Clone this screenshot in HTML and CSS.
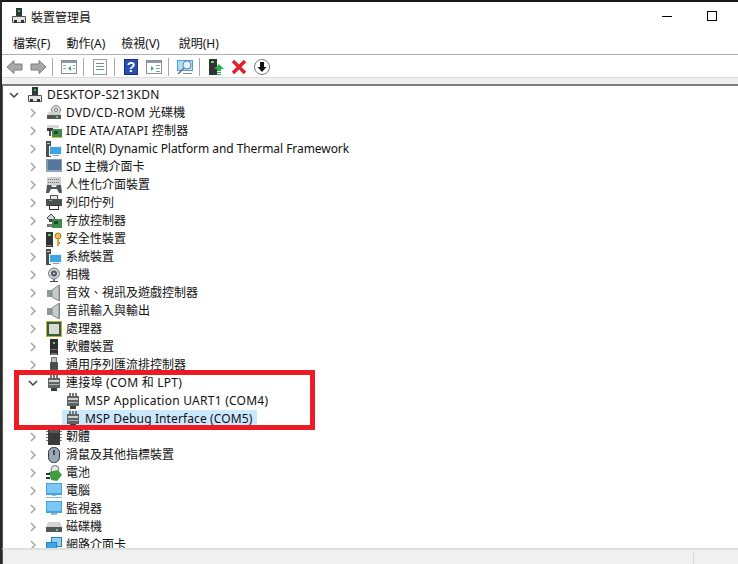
FILE: index.html
```html
<!DOCTYPE html>
<html lang="zh-Hant">
<head>
<meta charset="utf-8">
<title>裝置管理員</title>
<link rel="stylesheet" href="styles.css">
</head>
<body>
<svg class="defs" width="0" height="0" aria-hidden="true">
  <defs>
    <symbol id="pc" viewBox="0 0 16 16">
      <rect x="5" y="0" width="6" height="8" fill="#2c3a35"/><rect x="7" y="2" width="2" height="2" fill="#3fbf5a"/>
      <path d="M1.500 8.500h13v6h-13z" fill="#e4e4e4" stroke="#555"/><rect x="3" y="12" width="3" height="3" fill="#333"/><rect x="10" y="12" width="3" height="3" fill="#333"/>
    </symbol>
    <symbol id="dvd" viewBox="0 0 16 16">
      <circle cx="10" cy="5" r="4.500" fill="#d5d5d5" stroke="#8d8d8d"/><circle cx="10" cy="5" r="1.500" fill="#fff" stroke="#777"/>
      <path d="M1 10l2-3h10l2 3z" fill="#cfcfcf"/><rect x="1" y="10" width="14" height="4" fill="#555"/><rect x="10" y="11" width="2" height="2" fill="#5fd06c"/>
    </symbol>
    <symbol id="ide" viewBox="0 0 16 16">
      <path d="M1 2h12v3H1z" fill="#d8d8d8"/><rect x="1" y="5" width="6" height="3" fill="#3d3d3d"/><rect x="3" y="8" width="2" height="5" fill="#555"/>
      <rect x="6" y="6" width="10" height="9" fill="#3f8a4d"/><rect x="8" y="8" width="4" height="3" fill="#1e4f2a"/><rect x="6" y="14" width="10" height="1" fill="#d6b34a"/>
    </symbol>
    <symbol id="sys" viewBox="0 0 16 16">
      <rect x="0" y="0" width="5" height="16" fill="#4a4f4f"/><rect x="1" y="2" width="3" height="1" fill="#bbb"/><rect x="3" y="5" width="13" height="10" fill="#e8f2f8"/><rect x="4" y="6" width="11" height="7" fill="#3fa4e6"/>
      <rect x="7" y="14" width="6" height="1" fill="#9a9a9a"/>
    </symbol>
    <symbol id="sd" viewBox="0 0 16 16">
      <rect x="0" y="0" width="16" height="13" fill="#7f9bb8"/><rect x="2" y="1" width="13" height="10" fill="#55779b"/><rect x="0" y="11" width="16" height="2" fill="#92a8bf"/>
    </symbol>
    <symbol id="hid" viewBox="0 0 16 16">
      <rect x="1" y="0" width="14" height="9" fill="#cfd2d3"/>
      <path d="M2 2h1v1H2zM4 2h1v1H4zM6 2h1v1H6zM8 2h1v1H8zM10 2h1v1h-1zM12 2h1v1h-1zM2 5h1v1H2zM4 5h1v1H4zM6 5h1v1H6zM8 5h1v1H8zM10 5h1v1h-1zM12 5h1v1h-1z" fill="#6d7275"/>
      <path d="M0 16l1-8h4l1 2h4l1-2h4l1 8h-3l-2-4H5l-2 4z" fill="#4f5659"/>
    </symbol>
    <symbol id="printer" viewBox="0 0 16 16">
      <rect x="4.500" y="0.500" width="7" height="5" fill="#e6e6e6" stroke="#555"/><rect x="0" y="4" width="16" height="7" fill="#4b5052"/><rect x="3" y="5" width="3" height="1" fill="#4fc85f"/><rect x="3.500" y="10.500" width="9" height="4" fill="#fff" stroke="#333"/>
    </symbol>
    <symbol id="storage" viewBox="0 0 16 16">
      <path d="M1 5l4-4 4 4-4 3z" fill="#d8d8d8" stroke="#444"/><rect x="3" y="6" width="3" height="3" fill="#444"/>
      <rect x="6" y="6" width="10" height="9" fill="#3f8a4d"/><rect x="8" y="8" width="4" height="3" fill="#1e4f2a"/><rect x="1" y="11" width="5" height="3" fill="#777"/>
    </symbol>
    <symbol id="key" viewBox="0 0 16 16">
      <rect x="0" y="1" width="7" height="15" fill="#333"/><rect x="2" y="3" width="3" height="2" fill="#4fd060"/><rect x="1" y="14" width="5" height="1" fill="#888"/>
      <circle cx="12" cy="5" r="3" fill="#eebc52" stroke="#a57a22"/><rect x="11" y="8" width="2" height="7" fill="#d8a53e"/><rect x="13" y="11" width="1" height="2" fill="#a57a22"/>
    </symbol>
    <symbol id="cam" viewBox="0 0 16 16">
      <circle cx="8" cy="6.500" r="5.500" fill="#d2d2d2" stroke="#777"/><circle cx="8" cy="6.500" r="3" fill="#4b5c68"/><circle cx="8" cy="6.500" r="1" fill="#cfe4f0"/><rect x="7" y="12" width="2" height="2" fill="#777"/><rect x="4" y="14" width="8" height="1" fill="#444"/>
    </symbol>
    <symbol id="sound" viewBox="0 0 16 16">
      <rect x="1" y="5" width="5" height="7" fill="#8f9899"/><path d="M6 5l7-5v16l-7-4z" fill="#c5cbcb" stroke="#848c8c"/><rect x="13" y="0" width="1" height="16" fill="#7d8686"/>
    </symbol>
    <symbol id="cpu" viewBox="0 0 16 16">
      <rect x="0" y="0" width="16" height="16" fill="#c8a93a"/><rect x="1" y="1" width="14" height="14" fill="#33603c"/><rect x="3" y="3" width="10" height="10" fill="#d9d9d3"/>
    </symbol>
    <symbol id="soft" viewBox="0 0 16 16">
      <rect x="4" y="0" width="8" height="16" fill="#2f2f2f"/><rect x="7" y="3" width="2" height="2" fill="#3fe060"/><rect x="5" y="10" width="6" height="1" fill="#777"/><rect x="5" y="14" width="6" height="2" fill="#777"/>
    </symbol>
    <symbol id="usb" viewBox="0 0 16 16">
      <rect x="5.500" y="0.500" width="5" height="5" fill="#c4c4c4" stroke="#777"/><rect x="4" y="5" width="8" height="8" rx="1" fill="#4a4f50"/><rect x="7" y="13" width="2" height="3" fill="#555"/>
    </symbol>
    <symbol id="port" viewBox="0 0 16 16">
      <path d="M4 0h2v3H4zM7 0h2v3H7zM10 0h2v3h-2z" fill="#777"/><rect x="2" y="3" width="12" height="10" fill="#5f6364"/><rect x="3" y="5" width="10" height="2" fill="#cfcfcf"/><rect x="3" y="9" width="10" height="1" fill="#b0b0b0"/><rect x="5" y="13" width="6" height="3" fill="#3a3d3e"/>
    </symbol>
    <symbol id="firmware" viewBox="0 0 16 16">
      <path d="M0 2h2v1H0zM0 5h2v1H0zM0 8h2v1H0zM0 11h2v1H0zM14 2h2v1h-2zM14 5h2v1h-2zM14 8h2v1h-2zM14 11h2v1h-2z" fill="#777"/><rect x="2" y="0" width="12" height="16" fill="#3a3a3a"/><rect x="3" y="1" width="10" height="3" fill="#595959"/>
    </symbol>
    <symbol id="mouse" viewBox="0 0 16 16">
      <rect x="2.500" y="0.500" width="11" height="15" rx="5" fill="#9aa8b5" stroke="#333"/><rect x="7" y="3" width="2" height="5" fill="#3f4a55"/>
    </symbol>
    <symbol id="battery" viewBox="0 0 16 16">
      <circle cx="9" cy="4.500" r="4" fill="#e8e8e8" stroke="#777"/><path d="M3 7l9-2 4 5-5 6-6-1z" fill="#3f9c3f"/><path d="M0 8h4v2H0zM0 12h4v2H0z" fill="#333"/>
    </symbol>
    <symbol id="monitor" viewBox="0 0 16 16">
      <rect x="0" y="0" width="16" height="12" fill="#3fa4e6"/><rect x="1" y="1" width="14" height="9" fill="#7cc8f2"/><rect x="6" y="12" width="4" height="1" fill="#9fb6c4"/><rect x="0" y="14" width="16" height="1" fill="#a8b4bb"/>
    </symbol>
    <symbol id="monitor2" viewBox="0 0 16 16">
      <rect x="0" y="0" width="16" height="12" fill="#3fa4e6"/><rect x="1" y="1" width="14" height="9" fill="#7cc8f2"/><rect x="5" y="12" width="6" height="2" fill="#9fb6c4"/>
    </symbol>
    <symbol id="disk" viewBox="0 0 16 16">
      <path d="M2 3h12l2 5H0z" fill="#d3d3d3"/><rect x="0" y="8" width="16" height="5" fill="#555"/><rect x="10" y="10" width="2" height="2" fill="#5fd06c"/>
    </symbol>
    <symbol id="net" viewBox="0 0 16 16">
      <rect x="5.500" y="0.500" width="10" height="9" fill="#8ecdf2" stroke="#2f7fb8"/><rect x="0.500" y="5.500" width="10" height="9" fill="#3fa4e6" stroke="#2f7fb8"/>
    </symbol>
    <symbol id="closed" viewBox="0 0 10 10">
      <path d="M3 1l4 4-4 4" fill="none" stroke="#a6a6a6" stroke-width="1.500"/>
    </symbol>
    <symbol id="open" viewBox="0 0 10 10">
      <path d="M1 3l4 4 4-4" fill="none" stroke="#404040" stroke-width="1.500"/>
    </symbol>
  </defs>
</svg>

<div class="window">
  <header class="titlebar">
    <svg class="title-icon"><use href="#pc"/></svg>
    <span class="title">裝置管理員</span>
    <div class="controls">
      <span class="minimize"></span>
      <span class="maximize"></span>
    </div>
  </header>

  <nav class="menubar">
    <span>檔案(F)</span>
    <span>動作(A)</span>
    <span class="menu-view">檢視(V)</span>
    <span>說明(H)</span>
  </nav>

  <div class="toolbar">
    <svg class="tool" viewBox="0 0 18 18"><path d="M1 9l7-6.500V6h8v6H8v3.500z" fill="#a9a9a9" stroke="#7d7d7d"/></svg>
    <svg class="tool" viewBox="0 0 18 18"><path d="M17 9l-7-6.500V6H2v6h8v3.500z" fill="#a9a9a9" stroke="#7d7d7d"/></svg>
    <i class="sep"></i>
    <svg class="tool" viewBox="0 0 18 18"><rect x="1.500" y="2.500" width="15" height="13" fill="#fff" stroke="#8a8f93"/><rect x="2" y="3" width="14" height="2" fill="#8d9aa5"/><path d="M11 8v5l-3-2.500z" fill="#3dae5a"/><path d="M3 7h3v1H3zM3 10h3v1H3zM13 7h2v1h-2zM13 10h2v1h-2z" fill="#7aa"/></svg>
    <i class="sep"></i>
    <svg class="tool" viewBox="0 0 18 18"><rect x="2.500" y="1.500" width="13" height="15" fill="#fdfdfd" stroke="#9a9a9a"/><path d="M5 5h8v1H5zM5 8h8v1H5zM5 11h8v1H5z" fill="#7b8b98"/><rect x="7" y="16" width="4" height="1" fill="#3dbdd8"/></svg>
    <i class="sep"></i>
    <svg class="tool" viewBox="0 0 18 18"><rect x="2.500" y="1.500" width="13" height="15" fill="#2b4fb0" stroke="#1a2f80"/><text x="9" y="14" class="help-mark">?</text></svg>
    <svg class="tool" viewBox="0 0 18 18"><rect x="1.500" y="2.500" width="15" height="13" fill="#fff" stroke="#8a8f93"/><rect x="2" y="3" width="14" height="2" fill="#8d9aa5"/><path d="M6 8v5l3-2.500z" fill="#3dae5a"/><path d="M11 7h4v1h-4zM11 10h4v1h-4zM11 13h4v1h-4z" fill="#7aa"/></svg>
    <i class="sep"></i>
    <svg class="tool" viewBox="0 0 18 18"><rect x="1.500" y="2.500" width="15" height="10" fill="#a9dcf6" stroke="#4ea1d6"/><circle cx="11" cy="7" r="4" fill="#e4f4fc" stroke="#6e8796"/><path d="M8 10l-6 6" stroke="#6e6e6e" stroke-width="1.500"/><rect x="7" y="15" width="9" height="1" fill="#8a8a8a"/></svg>
    <i class="sep"></i>
    <svg class="tool" viewBox="0 0 18 18"><rect x="2" y="1" width="8" height="16" fill="#333"/><rect x="4" y="3" width="3" height="2" fill="#4ee06a"/><path d="M12 6l5 5h-3v2h-4v-2H7z" fill="#28b24b"/><path d="M10 14h4v1h-4zM10 16h4v1h-4z" fill="#28b24b"/></svg>
    <svg class="tool" viewBox="0 0 18 18"><path d="M3 3l12 12M15 3L3 15" stroke="#e0202a" stroke-width="3.500"/></svg>
    <svg class="tool" viewBox="0 0 18 18"><circle cx="9" cy="9" r="7.500" fill="#fff" stroke="#777"/><path d="M7 4h4v5h2.500L9 14 4.500 9H7z" fill="#111"/></svg>
  </div>
  <div class="strip"></div>

  <main class="tree">
    <div class="row root"><svg class="arrow"><use href="#open"/></svg><svg class="icon"><use href="#pc"/></svg><span class="label caps">DESKTOP-S213KDN</span></div>
    <div class="row"><svg class="arrow"><use href="#closed"/></svg><svg class="icon"><use href="#dvd"/></svg><span class="label caps">DVD/CD-ROM 光碟機</span></div>
    <div class="row"><svg class="arrow"><use href="#closed"/></svg><svg class="icon"><use href="#ide"/></svg><span class="label caps">IDE ATA/ATAPI 控制器</span></div>
    <div class="row"><svg class="arrow"><use href="#closed"/></svg><svg class="icon"><use href="#sys"/></svg><span class="label long">Intel(R) Dynamic Platform and Thermal Framework</span></div>
    <div class="row"><svg class="arrow"><use href="#closed"/></svg><svg class="icon"><use href="#sd"/></svg><span class="label">SD 主機介面卡</span></div>
    <div class="row"><svg class="arrow"><use href="#closed"/></svg><svg class="icon"><use href="#hid"/></svg><span class="label">人性化介面裝置</span></div>
    <div class="row"><svg class="arrow"><use href="#closed"/></svg><svg class="icon"><use href="#printer"/></svg><span class="label">列印佇列</span></div>
    <div class="row"><svg class="arrow"><use href="#closed"/></svg><svg class="icon"><use href="#storage"/></svg><span class="label">存放控制器</span></div>
    <div class="row"><svg class="arrow"><use href="#closed"/></svg><svg class="icon"><use href="#key"/></svg><span class="label">安全性裝置</span></div>
    <div class="row"><svg class="arrow"><use href="#closed"/></svg><svg class="icon"><use href="#sys"/></svg><span class="label">系統裝置</span></div>
    <div class="row"><svg class="arrow"><use href="#closed"/></svg><svg class="icon"><use href="#cam"/></svg><span class="label">相機</span></div>
    <div class="row"><svg class="arrow"><use href="#closed"/></svg><svg class="icon"><use href="#sound"/></svg><span class="label">音效、視訊及遊戲控制器</span></div>
    <div class="row"><svg class="arrow"><use href="#closed"/></svg><svg class="icon"><use href="#sound"/></svg><span class="label">音訊輸入與輸出</span></div>
    <div class="row"><svg class="arrow"><use href="#closed"/></svg><svg class="icon"><use href="#cpu"/></svg><span class="label">處理器</span></div>
    <div class="row"><svg class="arrow"><use href="#closed"/></svg><svg class="icon"><use href="#soft"/></svg><span class="label">軟體裝置</span></div>
    <div class="row"><svg class="arrow"><use href="#closed"/></svg><svg class="icon"><use href="#usb"/></svg><span class="label">通用序列匯流排控制器</span></div>
    <div class="row"><svg class="arrow"><use href="#open"/></svg><svg class="icon"><use href="#port"/></svg><span class="label caps">連接埠 (COM 和 LPT)</span></div>
    <div class="row child"><svg class="icon"><use href="#port"/></svg><span class="label caps">MSP Application UART1 (COM4)</span></div>
    <div class="row child"><div class="selected"><svg class="icon"><use href="#port"/></svg><span class="label mixed">MSP Debug Interface (COM5)</span></div></div>
    <div class="row"><svg class="arrow"><use href="#closed"/></svg><svg class="icon"><use href="#firmware"/></svg><span class="label">韌體</span></div>
    <div class="row"><svg class="arrow"><use href="#closed"/></svg><svg class="icon"><use href="#mouse"/></svg><span class="label">滑鼠及其他指標裝置</span></div>
    <div class="row"><svg class="arrow"><use href="#closed"/></svg><svg class="icon"><use href="#battery"/></svg><span class="label">電池</span></div>
    <div class="row"><svg class="arrow"><use href="#closed"/></svg><svg class="icon"><use href="#monitor"/></svg><span class="label">電腦</span></div>
    <div class="row"><svg class="arrow"><use href="#closed"/></svg><svg class="icon"><use href="#monitor2"/></svg><span class="label">監視器</span></div>
    <div class="row"><svg class="arrow"><use href="#closed"/></svg><svg class="icon"><use href="#disk"/></svg><span class="label">磁碟機</span></div>
    <div class="row"><svg class="arrow"><use href="#closed"/></svg><svg class="icon"><use href="#net"/></svg><span class="label">網路介面卡</span></div>
  </main>

  <footer class="statusbar">
    <div class="status-main"></div>
    <div class="status-side"></div>
  </footer>

  <div class="highlight"></div>
</div>
</body>
</html>
```

FILE: styles.css
```css
* {
  box-sizing: border-box;
}

html,
body {
  margin: 0;
  height: 100%;
  overflow: hidden;
  background: #fff;
}

.defs {
  position: absolute;
}

.window {
  position: relative;
  display: flex;
  flex-direction: column;
  width: 738px;
  height: 564px;
  border-top: 2px solid #1a1a1a;
  border-left: 2px solid #2a2a2a;
  font-family: "Noto Sans", "Noto Sans CJK TC", sans-serif;
  font-size: 12px;
  color: #111;
}

.titlebar {
  display: flex;
  align-items: center;
  height: 28px;
  flex: none;
  padding-left: 9px;
}

.title-icon {
  width: 16px;
  height: 16px;
  flex: none;
}

.title {
  margin-left: 4px;
  padding-top: 2px;
  font-size: 12px;
}

.controls {
  display: flex;
  align-items: center;
  margin-left: auto;
  padding-right: 21px;
  gap: 35px;
}

.minimize {
  width: 10px;
  height: 1px;
  background: #000;
}

.maximize {
  width: 10px;
  height: 10px;
  border: 1px solid #000;
}

.menubar {
  display: flex;
  align-items: center;
  flex: none;
  height: 25px;
  padding: 2px 0 0 11px;
  gap: 16px;
  border-bottom: 1px solid #b0b0b0;
}

.menu-view {
  margin-right: 3px;
}

.toolbar {
  display: flex;
  align-items: center;
  flex: none;
  height: 22px;
  padding: 2px 0 0 4px;
}

.tool {
  width: 18px;
  height: 18px;
  margin-right: 5px;
  flex: none;
}

.sep {
  width: 1px;
  height: 18px;
  margin-right: 7px;
  background: #a8a8a8;
}

.help-mark {
  font-family: "Liberation Sans", sans-serif;
  font-size: 14px;
  font-weight: 700;
  fill: #fff;
  text-anchor: middle;
}

.strip {
  flex: none;
  height: 9px;
  background: #f0f0f0;
  border-top: 1px solid #dcdcdc;
  border-bottom: 2px solid #7c7c7c;
}

.tree {
  flex: 1;
  min-height: 0;
  overflow: hidden;
  border-left: 1px solid #555;
}

.row {
  display: flex;
  align-items: center;
  height: 18px;
  padding-left: 25px;
  white-space: nowrap;
}

.root {
  padding-left: 6px;
}

.child {
  padding-left: 59px;
}

.child .icon {
  margin-left: 3px;
}

.arrow {
  width: 10px;
  height: 10px;
  margin-right: 8px;
  flex: none;
}

.icon {
  width: 16px;
  height: 16px;
  flex: none;
}

.label {
  margin-left: 4px;
  line-height: 18px;
}

.caps {
  letter-spacing: 0.25px;
}

.mixed {
  letter-spacing: 0.12px;
}

.long {
  letter-spacing: -0.06px;
}

.selected {
  display: flex;
  align-items: center;
  height: 18px;
  padding-right: 4px;
  background: #cce8ff;
}

.statusbar {
  display: flex;
  flex: none;
  height: 16px;
  background: #f0f0f0;
  border-top: 2px solid #e0e0e0;
  border-left: 1px solid #555;
}

.status-main {
  width: 691px;
  margin-top: 2px;
  border-right: 1px solid #d8d8d8;
}

.status-side {
  flex: 1;
}

.highlight {
  position: absolute;
  left: 12px;
  top: 368px;
  width: 301px;
  height: 60px;
  border: 5px solid #ed1c24;
  pointer-events: none;
}
```
